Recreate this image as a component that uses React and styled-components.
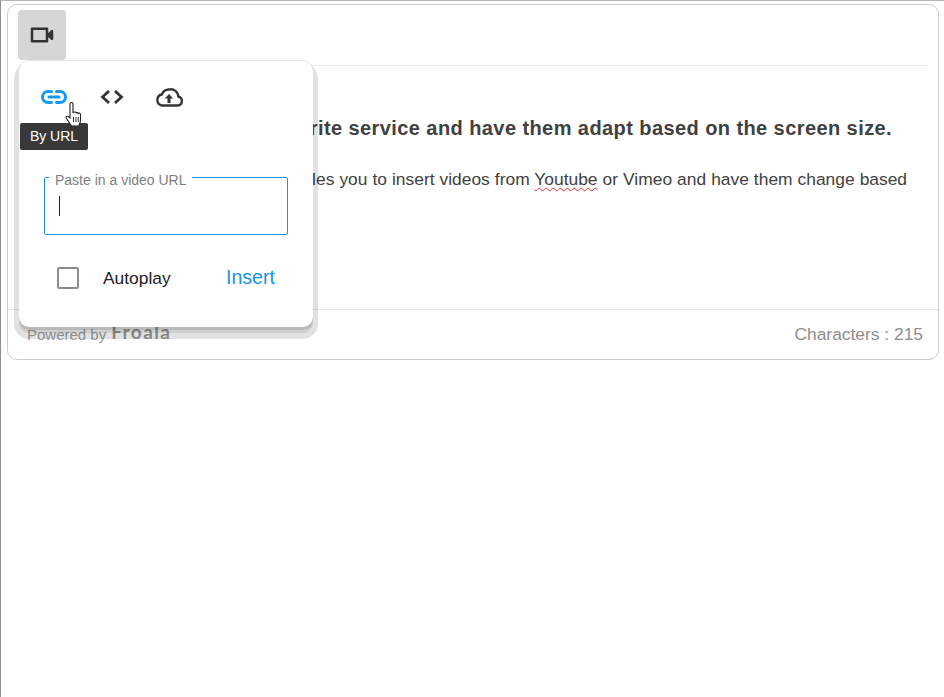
import React from "react";
import styled, { createGlobalStyle } from "styled-components";

const GlobalStyle = createGlobalStyle`
  html, body {
    margin: 0;
    padding: 0;
    background: #fff;
  }
  body {
    height: 697px;
    box-sizing: border-box;
    border-left: 1px solid #8f8f8f;
    border-top: 1px solid #b5b5b5;
    overflow: hidden;
    font-family: "Liberation Sans", Arial, sans-serif;
  }
`;

const Page = styled.div`
  position: relative;
  padding: 3px 5px 0 6px;
`;

const Editor = styled.div`
  border: 1px solid #ccc;
  border-radius: 10px;
  height: 356px;
  box-sizing: border-box;
  display: flex;
  flex-direction: column;
`;

const Toolbar = styled.div`
  height: 61px;
  flex: none;
  margin: 0 10px;
  padding: 5px 0 0;
  box-sizing: border-box;
  border-bottom: 1px solid #ebebeb;
`;

const ToolButton = styled.div`
  width: 48px;
  height: 50px;
  border-radius: 4px;
  background: #d6d6d6;
  display: flex;
  align-items: center;
  justify-content: center;
`;

const Content = styled.div`
  flex: 1;
  padding: 50px 20px 0 21px;
  color: #414141;
  overflow: hidden;
`;

const Heading = styled.div`
  font-size: 20px;
  font-weight: bold;
  line-height: 24px;
  letter-spacing: 0.42px;
  white-space: nowrap;
`;

const Paragraph = styled.div`
  font-size: 17.4px;
  line-height: 24px;
  margin-top: 27px;
  padding-left: 4px;
  word-spacing: 0.2px;
  white-space: nowrap;
`;

const Squiggly = styled.span`
  text-decoration: underline wavy #e62d2d 1px;
  text-underline-offset: 2px;
`;

const Footer = styled.div`
  height: 50px;
  flex: none;
  box-sizing: border-box;
  border-top: 1px solid #e6e6e6;
  display: flex;
  align-items: center;
  justify-content: space-between;
  padding: 0 15px 0 19px;
`;

const Powered = styled.div`
  font-size: 15px;
  color: #a0a0a0;
  display: flex;
  align-items: baseline;
  gap: 5px;
  padding-bottom: 5px;
`;

const Brand = styled.span`
  font-family: "Lato", sans-serif;
  font-size: 19px;
  font-weight: 700;
  letter-spacing: 1.4px;
  color: #9a9a9a;
  position: relative;
  top: -1px;
`;

const Counter = styled.div`
  font-size: 17.4px;
  color: #8e8e8e;
`;

const Popup = styled.div`
  position: absolute;
  left: 18px;
  top: 60px;
  width: 294px;
  height: 266px;
  box-sizing: border-box;
  background: #fff;
  border-radius: 10px;
  padding: 20px 25px 0 22px;
  box-shadow:
    0 -1px 0 0 rgba(0, 0, 0, 0.1),
    0 3px 0 0 rgba(0, 0, 0, 0.106),
    0 6px 0 0 rgba(0, 0, 0, 0.084),
    0 7px 0 5px rgba(0, 0, 0, 0.115);
`;

const PopupTabs = styled.div`
  display: flex;
  align-items: center;
  height: 32px;
`;

const Tab = styled.div`
  width: ${props => props.$width}px;
  height: 32px;
  margin-right: ${props => props.$gap}px;
  display: flex;
  align-items: center;
  justify-content: center;
`;

const Tooltip = styled.div`
  position: absolute;
  left: 1px;
  top: 62px;
  width: 68px;
  height: 27px;
  border-radius: 2px;
  background: #383838;
  color: #fff;
  font-size: 14px;
  line-height: 27px;
  text-align: center;
`;

const Cursor = styled.svg`
  position: absolute;
  left: 46px;
  top: 41px;
  z-index: 2;
`;

const Field = styled.div`
  position: relative;
  margin-top: 64px;
  margin-left: 3px;
  height: 58px;
  box-sizing: border-box;
  border: 1px solid #1e90ea;
  border-radius: 2px;
  padding: 18px 14px 0;
`;

const FieldLabel = styled.span`
  position: absolute;
  left: 4px;
  top: -4px;
  padding: 0 5px 0 6px;
  background: #fff;
  color: #808080;
  font-size: 14px;
  line-height: 13px;
`;

const Caret = styled.div`
  width: 1px;
  height: 20px;
  background: #222;
`;

const Actions = styled.div`
  display: flex;
  align-items: center;
  margin-top: 31px;
  padding: 0 13px 0 16px;
`;

const Checkbox = styled.div`
  width: 22px;
  height: 22px;
  box-sizing: border-box;
  border: 2px solid #8c8c8c;
  border-radius: 2px;
`;

const CheckLabel = styled.span`
  margin-left: 24px;
  padding-top: 2px;
  font-size: 17.4px;
  color: #222;
  flex: 1;
`;

const InsertButton = styled.span`
  font-size: 19.6px;
  color: #1e90ea;
`;

const App = () => {
  return (
    <Page>
      <GlobalStyle />
      <Editor>
        <Toolbar>
          <ToolButton>
            <svg width="30" height="30" viewBox="0 0 24 24" fill="#333">
              <path d="M15 8v8H5V8h10m2 2.500V7a1 1 0 0 0-1-1H4a1 1 0 0 0-1 1v10a1 1 0 0 0 1 1h12a1 1 0 0 0 1-1v-3.500l2.290 2.290a1 1 0 0 0 1.710-.71V8.910a1 1 0 0 0-1.710-.71z" />
            </svg>
          </ToolButton>
        </Toolbar>
        <Content>
          <Heading>Insert videos from your favorite service and have them adapt based on the screen size.</Heading>
          <Paragraph>
            The Froala Editor Video plugin enables you to insert videos from <Squiggly>Youtube</Squiggly> or Vimeo and have them change based
            <br />
            on the device.
          </Paragraph>
        </Content>
        <Footer>
          <Powered>
            Powered by <Brand>Froala</Brand>
          </Powered>
          <Counter>Characters : 215</Counter>
        </Footer>
      </Editor>
      <Popup>
        <PopupTabs>
          <Tab $width={26} $gap={32}>
            <svg width="26" height="14" viewBox="0 0 26 14" fill="none" stroke="#119bf2" strokeWidth="3" strokeLinecap="round">
              <path d="M10.500 1.500H7a5.500 5.500 0 0 0 0 11h3.500" />
              <path d="M15.500 1.500H19a5.500 5.500 0 0 1 0 11h-3.500" />
              <path d="M8 7h10" />
            </svg>
          </Tab>
          <Tab $width={26} $gap={30}>
            <svg width="26" height="16" viewBox="0 0 26 16" fill="none" stroke="#333" strokeWidth="2.800">
              <path d="M10 2 3.500 8l6.500 6" />
              <path d="m16 2 6.500 6-6.500 6" />
            </svg>
          </Tab>
          <Tab $width={28} $gap={0}>
            <svg width="28" height="19" viewBox="0 0 28 19" fill="none">
              <path d="M7 17.500h15.500a4.500 4.500 0 0 0 .8-8.900A7.500 7.500 0 0 0 14 1.500a7.800 7.800 0 0 0-7.200 5A5.600 5.600 0 0 0 7 17.500z" stroke="#333" strokeWidth="2.300" />
              <path d="M14 6 9.800 10.500h2.700v4.500h3v-4.500h2.700z" fill="#333" />
            </svg>
          </Tab>
        </PopupTabs>
        <Cursor width="18" height="25" viewBox="0 0 18 25">
          <path d="M5 2a1.500 1.500 0 0 1 3 0v8.500l1.500-.4a1.300 1.300 0 0 1 1.800.7 1.300 1.300 0 0 1 2 .7 1.300 1.300 0 0 1 2.200 1V18c0 2.500-1 4-1.600 6H6.500L1.500 16.500c-1-1.600.9-3 2.100-1.800L5 16z" fill="#fff" stroke="#222" strokeWidth="1.100" />
          <path d="M8.500 15v5M11 15v5M13.300 15v5" stroke="#222" strokeWidth=".9" />
        </Cursor>
        <Tooltip>By URL</Tooltip>
        <Field>
          <FieldLabel>Paste in a video URL</FieldLabel>
          <Caret />
        </Field>
        <Actions>
          <Checkbox />
          <CheckLabel>Autoplay</CheckLabel>
          <InsertButton>Insert</InsertButton>
        </Actions>
      </Popup>
    </Page>
  );
};

export default App;
